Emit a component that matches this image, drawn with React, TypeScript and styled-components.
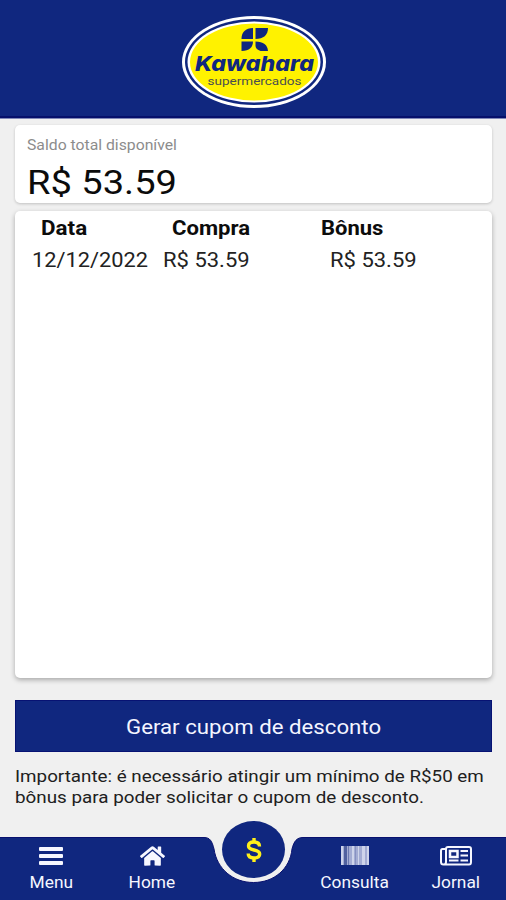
import React from "react";
import styled, { createGlobalStyle } from "styled-components";
import { FaHome } from "react-icons/fa";

const NAVY = "#10277f";
const YELLOW = "#fff200";

const GlobalStyle = createGlobalStyle`
  * { box-sizing: border-box; }
  body { margin: 0; background: #f0f0f0; font-family: Roboto, "Liberation Sans", sans-serif; }
`;

const Screen = styled.div`
  width: 506px;
  height: 900px;
  display: flex;
  flex-direction: column;
  overflow: hidden;
  background: #f0f0f0;
`;

const Header = styled.header`
  height: 119px;
  flex: none;
  display: flex;
  justify-content: center;
  padding: 15px 0 0 1px;
  background: ${NAVY};
  border-bottom: 1px solid #8188b8;
  box-shadow: inset 0 -2px 0 #06106b;
`;

const Content = styled.main`
  flex: 1;
  min-height: 0;
  display: flex;
  flex-direction: column;
  padding: 6px 14px 0 15px;
`;

const Card = styled.section`
  background: #fff;
  border-radius: 5px;
  box-shadow: 0 1px 3px rgba(0, 0, 0, 0.2);
`;

const BalanceCard = styled(Card)`
  height: 78px;
  flex: none;
  padding: 10px 12px 0;
`;

const HistoryCard = styled(Card)`
  height: 467px;
  flex: none;
  margin-top: 8px;
  box-shadow: 0 2px 5px rgba(0, 0, 0, 0.3);
`;

const Wide = styled.span<{ $x: number; $center?: boolean }>`
  display: inline-block;
  white-space: nowrap;
  transform: scaleX(${(p) => p.$x});
  transform-origin: ${(p) => (p.$center ? "center" : "left")};
`;

const Label = styled.div`
  font-size: 14px;
  line-height: 20px;
  color: #8c8c8c;
`;

const Amount = styled.div`
  font-size: 34px;
  line-height: 40px;
  margin-top: 7px;
  color: #0b0b0b;
`;

const Row = styled.div<{ $head?: boolean }>`
  display: grid;
  grid-template-columns: ${(p) => (p.$head ? "131px 149px 1fr" : "131px 167px 1fr")};
  height: ${(p) => (p.$head ? 33 : 32)}px;
  padding-left: ${(p) => (p.$head ? 26 : 17)}px;
  align-items: center;
  font-size: 20px;
  font-weight: ${(p) => (p.$head ? 700 : 400)};
  color: ${(p) => (p.$head ? "#0c0c0c" : "#222")};
`;

const CouponButton = styled.button`
  height: 52px;
  flex: none;
  margin-top: 22px;
  padding: 2px 0 0 1px;
  border: 1px solid #071273;
  background: ${NAVY};
  color: #f4f5ff;
  font-family: inherit;
  font-size: 21px;
  line-height: 30px;
`;

const Note = styled.p`
  margin: 14px 0 0;
  font-size: 17px;
  line-height: 20.5px;
  color: #202020;
`;

const Footer = styled.footer`
  position: relative;
  flex: none;
  height: 64px;
  display: grid;
  grid-template-columns: repeat(5, 1fr);
`;

const FooterShape = styled.svg`
  position: absolute;
  left: 0;
  bottom: 0;
`;

const Tab = styled.a`
  position: relative;
  display: flex;
  flex-direction: column;
  align-items: center;
  padding: 9px 0 0 1px;
  color: #f6f7ff;
  font-size: 17px;
  line-height: 20px;

  > svg { height: 22px; margin-bottom: 5px; }
`;

const HomeIcon = styled(FaHome)`
  && { width: 25px; }
`;

const MainAction = styled.a`
  position: absolute;
  left: 222px;
  top: -15px;
  width: 63px;
  height: 57px;
  border-radius: 50%;
  display: flex;
  align-items: center;
  justify-content: center;
  background: ${NAVY};
  color: #fff01a;
`;

const Wordmark = styled.text`
  font: italic 800 20.5px Inter, sans-serif;
  font-feature-settings: "cv11";
`;

function Logo() {
  return (
    <svg width="146" height="94" viewBox="0 0 146 94" role="img" aria-label="Kawahara supermercados">
      <ellipse cx="73" cy="47" rx="72" ry="46" fill="#fff" />
      <ellipse cx="73" cy="47" rx="69" ry="43" fill={NAVY} />
      <ellipse cx="73" cy="47" rx="66.5" ry="40.5" fill="#fff" />
      <ellipse cx="73" cy="47" rx="64" ry="38.5" fill={YELLOW} />
      <g fill={NAVY} transform="translate(-0.5 0)">
        <path d="M61 24C61 17 65 13 72.500 13V24Z" />
        <path d="M75 24V13H87.500C87.500 20 83 24 75 24Z" />
        <path d="M61 26.500H72.500C72.500 32 69 36 61 36Z" />
        <path d="M75 26.500C83 26.500 87 30 87.500 36H80C77 35 75 33 75 31Z" />
      </g>
      <Wordmark x="14" y="56" textLength="119" lengthAdjust="spacingAndGlyphs" fill={NAVY}>Kawahara</Wordmark>
      <text x="26.500" y="69.500" textLength="94" lengthAdjust="spacingAndGlyphs" fontFamily="Roboto, sans-serif" fontSize="11" fill="#4a4e50">supermercados</text>
    </svg>
  );
}

function MenuIcon() {
  return (
    <svg width="24" viewBox="0 0 24 22" fill="currentColor">
      <rect y="2" width="24" height="4" rx="1" />
      <rect y="9" width="24" height="4" rx="1" />
      <rect y="16" width="24" height="4" rx="1" />
    </svg>
  );
}

function BarcodeIcon() {
  return (
    <svg width="28" viewBox="0 0 28 22">
      <rect y="1" width="28" height="19" fill="#a3acd3" />
      <g fill="#ced4ea">
        <rect y="1" width="2" height="19" />
        <rect x="11" y="1" width="2" height="19" />
        <rect x="17" y="1" width="1" height="19" />
        <rect x="21" y="1" width="3" height="19" />
        <rect x="26" y="1" width="2" height="19" />
      </g>
      <rect x="3" y="1" width="3" height="19" fill="#51619f" />
      <rect x="7" y="1" width="1" height="19" fill="#6c79b0" />
      <rect x="14" y="1" width="1" height="19" fill="#8791c1" />
    </svg>
  );
}

function NewsIcon() {
  return (
    <svg width="32" viewBox="0 0 32 22" fill="none" stroke="currentColor" strokeWidth="2">
      <path d="M6 4H2.500Q1 4 1 6V17Q1 19.500 3.500 19.500H29Q31 19.500 31 17V4Q31 2 29 2H8Q6 2 6 4V17Q6 19.500 3.500 19.500" />
      <rect x="10" y="6" width="7.500" height="6" strokeWidth="2.500" />
      <path d="M20.500 6H28M20.500 10.500H28M9 15.500H18.500M20.500 15.500H28" />
    </svg>
  );
}

function DollarIcon() {
  return (
    <svg width="16" height="26" viewBox="0 0 16 26" fill="none" stroke="currentColor">
      <path d="M8 1V5M8 21V25" strokeWidth="3.400" />
      <path d="M13.500 9.500C13.500 6.500 11.500 5 8 5C4.500 5 2.500 6.500 2.500 9C2.500 14.500 13.700 11.500 13.700 17C13.700 19.500 11.500 21 8 21C4.300 21 2.200 19.300 2.200 16.500" strokeWidth="3.400" />
    </svg>
  );
}

export default function App() {
  return (
    <Screen>
      <GlobalStyle />
      <Header>
        <Logo />
      </Header>
      <Content>
        <BalanceCard>
          <Label><Wide $x={1.125}>Saldo total disponível</Wide></Label>
          <Amount><Wide $x={1.12}>R$ 53.59</Wide></Amount>
        </BalanceCard>
        <HistoryCard>
          <Row $head>
            <Wide $x={1.12}>Data</Wide>
            <Wide $x={1.105}>Compra</Wide>
            <Wide $x={1.1}>Bônus</Wide>
          </Row>
          <Row>
            <Wide $x={1.09}>12/12/2022</Wide>
            <Wide $x={1.1}>R$ 53.59</Wide>
            <Wide $x={1.1}>R$ 53.59</Wide>
          </Row>
        </HistoryCard>
        <CouponButton><Wide $x={1.058} $center>Gerar cupom de desconto</Wide></CouponButton>
        <Note>
          <Wide $x={1.105}>Importante: é necessário atingir um mínimo de R$50 em</Wide>
          <br />
          <Wide $x={1.107}>bônus para poder solicitar o cupom de desconto.</Wide>
        </Note>
      </Content>
      <Footer>
        <FooterShape width="506" height="64" viewBox="0 0 506 64">
          <path
            d="M-2 1.500H204C210 1.500 212 5 214 13C217 33 233 46.500 253.500 46.500C274 46.500 290 33 292 13C294 5 297 1.500 303 1.500H508V66H-2Z"
            fill={NAVY}
            stroke="#09116f"
            strokeWidth="1"
          />
        </FooterShape>
        <Tab><MenuIcon /><Wide $x={1.02} $center>Menu</Wide></Tab>
        <Tab><HomeIcon preserveAspectRatio="none" /><Wide $x={1.02} $center>Home</Wide></Tab>
        <MainAction><DollarIcon /></MainAction>
        <span />
        <Tab><BarcodeIcon /><Wide $x={1.02} $center>Consulta</Wide></Tab>
        <Tab><NewsIcon /><Wide $x={1.02} $center>Jornal</Wide></Tab>
      </Footer>
    </Screen>
  );
}
